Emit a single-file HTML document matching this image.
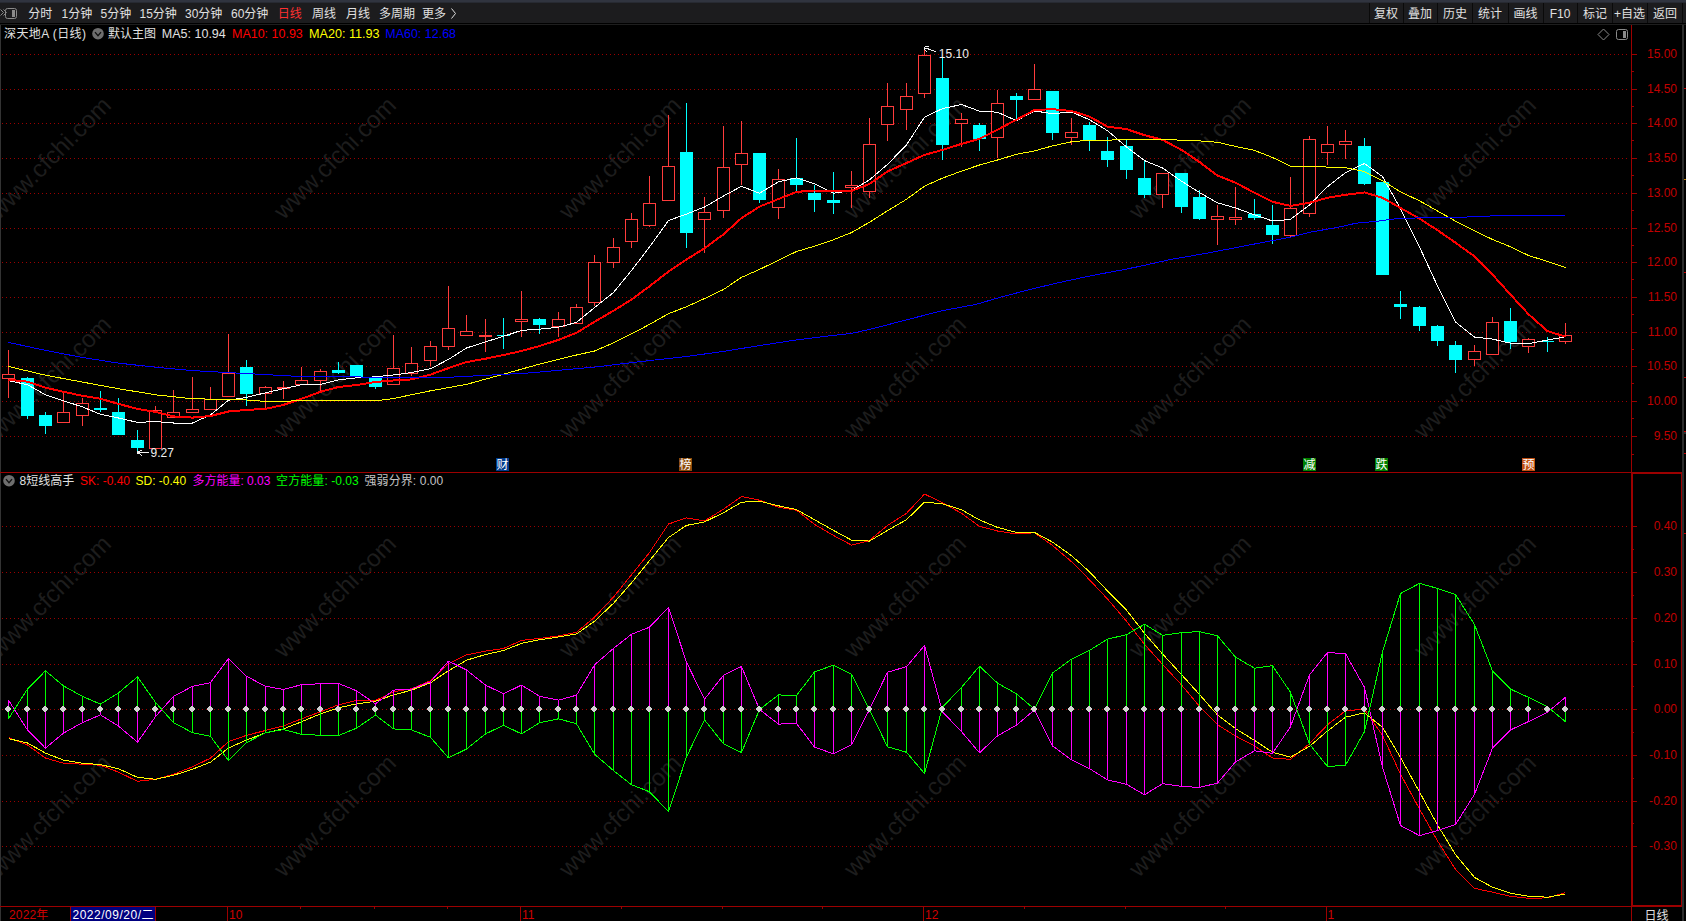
<!DOCTYPE html>
<html lang="zh"><head><meta charset="utf-8"><title>深天地A (日线)</title>
<style>
html,body{margin:0;padding:0;background:#000;}
body{width:1686px;height:921px;overflow:hidden;position:relative;font-family:"Liberation Sans","Noto Sans CJK SC",sans-serif;}
svg{position:absolute;left:0;top:0;display:block}
text{font-family:"Liberation Sans","Noto Sans CJK SC",sans-serif;font-size:12px;}
.wm text{font-size:24.3px;fill:#1d1d1d;}
.ce{shape-rendering:crispEdges}
</style></head><body>
<svg width="1686" height="921" viewBox="0 0 1686 921">
<rect width="1686" height="921" fill="#000"/>
<g class="wm">
<text text-anchor="middle" transform="translate(50,158.0) rotate(-45)" x="0" y="8">www.cfchi.com</text>
<text text-anchor="middle" transform="translate(335,158.0) rotate(-45)" x="0" y="8">www.cfchi.com</text>
<text text-anchor="middle" transform="translate(620,158.0) rotate(-45)" x="0" y="8">www.cfchi.com</text>
<text text-anchor="middle" transform="translate(905,158.0) rotate(-45)" x="0" y="8">www.cfchi.com</text>
<text text-anchor="middle" transform="translate(1190,158.0) rotate(-45)" x="0" y="8">www.cfchi.com</text>
<text text-anchor="middle" transform="translate(1475,158.0) rotate(-45)" x="0" y="8">www.cfchi.com</text>
<text text-anchor="middle" transform="translate(1760,158.0) rotate(-45)" x="0" y="8">www.cfchi.com</text>
<text text-anchor="middle" transform="translate(50,377.3) rotate(-45)" x="0" y="8">www.cfchi.com</text>
<text text-anchor="middle" transform="translate(335,377.3) rotate(-45)" x="0" y="8">www.cfchi.com</text>
<text text-anchor="middle" transform="translate(620,377.3) rotate(-45)" x="0" y="8">www.cfchi.com</text>
<text text-anchor="middle" transform="translate(905,377.3) rotate(-45)" x="0" y="8">www.cfchi.com</text>
<text text-anchor="middle" transform="translate(1190,377.3) rotate(-45)" x="0" y="8">www.cfchi.com</text>
<text text-anchor="middle" transform="translate(1475,377.3) rotate(-45)" x="0" y="8">www.cfchi.com</text>
<text text-anchor="middle" transform="translate(1760,377.3) rotate(-45)" x="0" y="8">www.cfchi.com</text>
<text text-anchor="middle" transform="translate(50,596.6) rotate(-45)" x="0" y="8">www.cfchi.com</text>
<text text-anchor="middle" transform="translate(335,596.6) rotate(-45)" x="0" y="8">www.cfchi.com</text>
<text text-anchor="middle" transform="translate(620,596.6) rotate(-45)" x="0" y="8">www.cfchi.com</text>
<text text-anchor="middle" transform="translate(905,596.6) rotate(-45)" x="0" y="8">www.cfchi.com</text>
<text text-anchor="middle" transform="translate(1190,596.6) rotate(-45)" x="0" y="8">www.cfchi.com</text>
<text text-anchor="middle" transform="translate(1475,596.6) rotate(-45)" x="0" y="8">www.cfchi.com</text>
<text text-anchor="middle" transform="translate(1760,596.6) rotate(-45)" x="0" y="8">www.cfchi.com</text>
<text text-anchor="middle" transform="translate(50,815.9000000000001) rotate(-45)" x="0" y="8">www.cfchi.com</text>
<text text-anchor="middle" transform="translate(335,815.9000000000001) rotate(-45)" x="0" y="8">www.cfchi.com</text>
<text text-anchor="middle" transform="translate(620,815.9000000000001) rotate(-45)" x="0" y="8">www.cfchi.com</text>
<text text-anchor="middle" transform="translate(905,815.9000000000001) rotate(-45)" x="0" y="8">www.cfchi.com</text>
<text text-anchor="middle" transform="translate(1190,815.9000000000001) rotate(-45)" x="0" y="8">www.cfchi.com</text>
<text text-anchor="middle" transform="translate(1475,815.9000000000001) rotate(-45)" x="0" y="8">www.cfchi.com</text>
<text text-anchor="middle" transform="translate(1760,815.9000000000001) rotate(-45)" x="0" y="8">www.cfchi.com</text>
</g>
<g class="ce" stroke="#9c0000" stroke-width="1" stroke-dasharray="1 3">
<line x1="2" y1="54.5" x2="1628" y2="54.5"/>
<line x1="2" y1="89.5" x2="1628" y2="89.5"/>
<line x1="2" y1="123.5" x2="1628" y2="123.5"/>
<line x1="2" y1="158.5" x2="1628" y2="158.5"/>
<line x1="2" y1="193.5" x2="1628" y2="193.5"/>
<line x1="2" y1="228.5" x2="1628" y2="228.5"/>
<line x1="2" y1="262.5" x2="1628" y2="262.5"/>
<line x1="2" y1="297.5" x2="1628" y2="297.5"/>
<line x1="2" y1="332.5" x2="1628" y2="332.5"/>
<line x1="2" y1="366.5" x2="1628" y2="366.5"/>
<line x1="2" y1="401.5" x2="1628" y2="401.5"/>
<line x1="2" y1="436.5" x2="1628" y2="436.5"/>
<line x1="2" y1="526.5" x2="1628" y2="526.5"/>
<line x1="2" y1="572.5" x2="1628" y2="572.5"/>
<line x1="2" y1="618.5" x2="1628" y2="618.5"/>
<line x1="2" y1="664.5" x2="1628" y2="664.5"/>
<line x1="2" y1="709.5" x2="1628" y2="709.5"/>
<line x1="2" y1="755.5" x2="1628" y2="755.5"/>
<line x1="2" y1="801.5" x2="1628" y2="801.5"/>
<line x1="2" y1="846.5" x2="1628" y2="846.5"/>
</g>
<g class="ce" fill="#9c0000">
<rect x="0" y="25" width="1" height="896" fill="#333"/>
<rect x="1682" y="24" width="2" height="897" fill="#2c2c2c"/>
<rect x="1631" y="25" width="1" height="447"/>
<rect x="1632" y="54" width="5" height="1"/>
<rect x="1632" y="71" width="2" height="1"/>
<rect x="1632" y="89" width="5" height="1"/>
<rect x="1632" y="106" width="2" height="1"/>
<rect x="1632" y="123" width="5" height="1"/>
<rect x="1632" y="140" width="2" height="1"/>
<rect x="1632" y="158" width="5" height="1"/>
<rect x="1632" y="175" width="2" height="1"/>
<rect x="1632" y="193" width="5" height="1"/>
<rect x="1632" y="210" width="2" height="1"/>
<rect x="1632" y="228" width="5" height="1"/>
<rect x="1632" y="245" width="2" height="1"/>
<rect x="1632" y="262" width="5" height="1"/>
<rect x="1632" y="279" width="2" height="1"/>
<rect x="1632" y="297" width="5" height="1"/>
<rect x="1632" y="314" width="2" height="1"/>
<rect x="1632" y="332" width="5" height="1"/>
<rect x="1632" y="349" width="2" height="1"/>
<rect x="1632" y="366" width="5" height="1"/>
<rect x="1632" y="383" width="2" height="1"/>
<rect x="1632" y="401" width="5" height="1"/>
<rect x="1632" y="418" width="2" height="1"/>
<rect x="1632" y="436" width="5" height="1"/>
<rect x="1632" y="454" width="2" height="1"/>
<rect x="0" y="472" width="1682" height="1"/>
<rect x="1631" y="472" width="2" height="434"/>
<rect x="1631" y="472" width="51" height="2"/>
<rect x="1681" y="472" width="1" height="434"/>
<rect x="1631" y="905" width="51" height="1"/>
<rect x="0" y="906" width="1682" height="1"/>
<rect x="1631" y="906" width="1" height="15"/>
<rect x="1633" y="526" width="4" height="1"/>
<rect x="1633" y="549" width="1" height="1"/>
<rect x="1633" y="572" width="4" height="1"/>
<rect x="1633" y="595" width="1" height="1"/>
<rect x="1633" y="618" width="4" height="1"/>
<rect x="1633" y="641" width="1" height="1"/>
<rect x="1633" y="664" width="4" height="1"/>
<rect x="1633" y="686" width="1" height="1"/>
<rect x="1633" y="709" width="4" height="1"/>
<rect x="1633" y="732" width="1" height="1"/>
<rect x="1633" y="755" width="4" height="1"/>
<rect x="1633" y="778" width="1" height="1"/>
<rect x="1633" y="801" width="4" height="1"/>
<rect x="1633" y="823" width="1" height="1"/>
<rect x="1633" y="846" width="4" height="1"/>
</g>
<g class="ce">
<rect x="8" y="350" width="1" height="24" fill="#ff3c3c"/>
<rect x="8" y="379" width="1" height="19" fill="#ff3c3c"/>
<rect x="2.5" y="374.5" width="12" height="4" fill="#000" stroke="#ff3c3c" stroke-width="1"/>
<rect x="27" y="377" width="1" height="42" fill="#00ffff"/>
<rect x="21" y="378" width="13" height="38" fill="#00ffff"/>
<rect x="45" y="412" width="1" height="22" fill="#00ffff"/>
<rect x="39" y="415" width="13" height="11" fill="#00ffff"/>
<rect x="63" y="392" width="1" height="20" fill="#ff3c3c"/>
<rect x="57.5" y="412.5" width="12" height="10" fill="#000" stroke="#ff3c3c" stroke-width="1"/>
<rect x="82" y="398" width="1" height="5" fill="#ff3c3c"/>
<rect x="82" y="416" width="1" height="10" fill="#ff3c3c"/>
<rect x="76.5" y="403.5" width="12" height="12" fill="#000" stroke="#ff3c3c" stroke-width="1"/>
<rect x="100" y="391" width="1" height="21" fill="#00ffff"/>
<rect x="94" y="408" width="13" height="2" fill="#00ffff"/>
<rect x="118" y="398" width="1" height="37" fill="#00ffff"/>
<rect x="112" y="412" width="13" height="23" fill="#00ffff"/>
<rect x="137" y="430" width="1" height="21" fill="#00ffff"/>
<rect x="131" y="440" width="13" height="8" fill="#00ffff"/>
<rect x="155" y="406" width="1" height="4" fill="#ff3c3c"/>
<rect x="149.5" y="410.5" width="12" height="38" fill="#000" stroke="#ff3c3c" stroke-width="1"/>
<rect x="173" y="390" width="1" height="22" fill="#ff3c3c"/>
<rect x="167.5" y="412.5" width="12" height="5" fill="#000" stroke="#ff3c3c" stroke-width="1"/>
<rect x="192" y="377" width="1" height="32" fill="#ff3c3c"/>
<rect x="186.5" y="409.5" width="12" height="3" fill="#000" stroke="#ff3c3c" stroke-width="1"/>
<rect x="210" y="387" width="1" height="12" fill="#ff3c3c"/>
<rect x="204.5" y="399.5" width="12" height="10" fill="#000" stroke="#ff3c3c" stroke-width="1"/>
<rect x="228" y="334" width="1" height="39" fill="#ff3c3c"/>
<rect x="222.5" y="373.5" width="12" height="23" fill="#000" stroke="#ff3c3c" stroke-width="1"/>
<rect x="246" y="360" width="1" height="46" fill="#00ffff"/>
<rect x="240" y="367" width="13" height="27" fill="#00ffff"/>
<rect x="265" y="386" width="1" height="1" fill="#ff3c3c"/>
<rect x="265" y="394" width="1" height="14" fill="#ff3c3c"/>
<rect x="259.5" y="387.5" width="12" height="6" fill="#000" stroke="#ff3c3c" stroke-width="1"/>
<rect x="283" y="381" width="1" height="6" fill="#ff3c3c"/>
<rect x="283" y="389" width="1" height="10" fill="#ff3c3c"/>
<rect x="277" y="387" width="13" height="2" fill="#ff3c3c"/>
<rect x="301" y="367" width="1" height="13" fill="#ff3c3c"/>
<rect x="295.5" y="380.5" width="12" height="4" fill="#000" stroke="#ff3c3c" stroke-width="1"/>
<rect x="320" y="369" width="1" height="2" fill="#ff3c3c"/>
<rect x="320" y="381" width="1" height="10" fill="#ff3c3c"/>
<rect x="314.5" y="371.5" width="12" height="9" fill="#000" stroke="#ff3c3c" stroke-width="1"/>
<rect x="338" y="362" width="1" height="12" fill="#00ffff"/>
<rect x="332" y="370" width="13" height="3" fill="#00ffff"/>
<rect x="356" y="365" width="1" height="12" fill="#00ffff"/>
<rect x="350" y="365" width="13" height="12" fill="#00ffff"/>
<rect x="375" y="378" width="1" height="11" fill="#00ffff"/>
<rect x="369" y="378" width="13" height="9" fill="#00ffff"/>
<rect x="393" y="335" width="1" height="33" fill="#ff3c3c"/>
<rect x="387.5" y="368.5" width="12" height="16" fill="#000" stroke="#ff3c3c" stroke-width="1"/>
<rect x="411" y="347" width="1" height="16" fill="#ff3c3c"/>
<rect x="411" y="374" width="1" height="2" fill="#ff3c3c"/>
<rect x="405.5" y="363.5" width="12" height="10" fill="#000" stroke="#ff3c3c" stroke-width="1"/>
<rect x="430" y="341" width="1" height="5" fill="#ff3c3c"/>
<rect x="430" y="361" width="1" height="5" fill="#ff3c3c"/>
<rect x="424.5" y="346.5" width="12" height="14" fill="#000" stroke="#ff3c3c" stroke-width="1"/>
<rect x="448" y="286" width="1" height="42" fill="#ff3c3c"/>
<rect x="448" y="347" width="1" height="3" fill="#ff3c3c"/>
<rect x="442.5" y="328.5" width="12" height="18" fill="#000" stroke="#ff3c3c" stroke-width="1"/>
<rect x="466" y="315" width="1" height="16" fill="#ff3c3c"/>
<rect x="460.5" y="331.5" width="12" height="4" fill="#000" stroke="#ff3c3c" stroke-width="1"/>
<rect x="485" y="319" width="1" height="16" fill="#ff3c3c"/>
<rect x="485" y="337" width="1" height="15" fill="#ff3c3c"/>
<rect x="479" y="335" width="13" height="2" fill="#ff3c3c"/>
<rect x="503" y="318" width="1" height="31" fill="#00ffff"/>
<rect x="497" y="335" width="13" height="1" fill="#00ffff"/>
<rect x="521" y="291" width="1" height="28" fill="#ff3c3c"/>
<rect x="521" y="322" width="1" height="15" fill="#ff3c3c"/>
<rect x="515.5" y="319.5" width="12" height="2" fill="#000" stroke="#ff3c3c" stroke-width="1"/>
<rect x="539" y="318" width="1" height="16" fill="#00ffff"/>
<rect x="533" y="319" width="13" height="6" fill="#00ffff"/>
<rect x="558" y="312" width="1" height="7" fill="#ff3c3c"/>
<rect x="558" y="327" width="1" height="10" fill="#ff3c3c"/>
<rect x="552.5" y="319.5" width="12" height="7" fill="#000" stroke="#ff3c3c" stroke-width="1"/>
<rect x="576" y="304" width="1" height="3" fill="#ff3c3c"/>
<rect x="570.5" y="307.5" width="12" height="16" fill="#000" stroke="#ff3c3c" stroke-width="1"/>
<rect x="594" y="255" width="1" height="7" fill="#ff3c3c"/>
<rect x="594" y="303" width="1" height="3" fill="#ff3c3c"/>
<rect x="588.5" y="262.5" width="12" height="40" fill="#000" stroke="#ff3c3c" stroke-width="1"/>
<rect x="613" y="238" width="1" height="9" fill="#ff3c3c"/>
<rect x="613" y="263" width="1" height="5" fill="#ff3c3c"/>
<rect x="607.5" y="247.5" width="12" height="15" fill="#000" stroke="#ff3c3c" stroke-width="1"/>
<rect x="631" y="213" width="1" height="6" fill="#ff3c3c"/>
<rect x="631" y="242" width="1" height="6" fill="#ff3c3c"/>
<rect x="625.5" y="219.5" width="12" height="22" fill="#000" stroke="#ff3c3c" stroke-width="1"/>
<rect x="649" y="176" width="1" height="27" fill="#ff3c3c"/>
<rect x="649" y="226" width="1" height="1" fill="#ff3c3c"/>
<rect x="643.5" y="203.5" width="12" height="22" fill="#000" stroke="#ff3c3c" stroke-width="1"/>
<rect x="668" y="115" width="1" height="51" fill="#ff3c3c"/>
<rect x="662.5" y="166.5" width="12" height="34" fill="#000" stroke="#ff3c3c" stroke-width="1"/>
<rect x="686" y="103" width="1" height="145" fill="#00ffff"/>
<rect x="680" y="152" width="13" height="81" fill="#00ffff"/>
<rect x="704" y="197" width="1" height="15" fill="#ff3c3c"/>
<rect x="704" y="220" width="1" height="33" fill="#ff3c3c"/>
<rect x="698.5" y="212.5" width="12" height="7" fill="#000" stroke="#ff3c3c" stroke-width="1"/>
<rect x="723" y="126" width="1" height="41" fill="#ff3c3c"/>
<rect x="723" y="211" width="1" height="7" fill="#ff3c3c"/>
<rect x="717.5" y="167.5" width="12" height="43" fill="#000" stroke="#ff3c3c" stroke-width="1"/>
<rect x="741" y="121" width="1" height="32" fill="#ff3c3c"/>
<rect x="741" y="165" width="1" height="20" fill="#ff3c3c"/>
<rect x="735.5" y="153.5" width="12" height="11" fill="#000" stroke="#ff3c3c" stroke-width="1"/>
<rect x="759" y="153" width="1" height="50" fill="#00ffff"/>
<rect x="753" y="153" width="13" height="47" fill="#00ffff"/>
<rect x="778" y="169" width="1" height="10" fill="#ff3c3c"/>
<rect x="778" y="208" width="1" height="11" fill="#ff3c3c"/>
<rect x="772.5" y="179.5" width="12" height="28" fill="#000" stroke="#ff3c3c" stroke-width="1"/>
<rect x="796" y="138" width="1" height="53" fill="#00ffff"/>
<rect x="790" y="178" width="13" height="7" fill="#00ffff"/>
<rect x="814" y="185" width="1" height="27" fill="#00ffff"/>
<rect x="808" y="193" width="13" height="7" fill="#00ffff"/>
<rect x="833" y="172" width="1" height="42" fill="#00ffff"/>
<rect x="827" y="200" width="13" height="3" fill="#00ffff"/>
<rect x="851" y="171" width="1" height="14" fill="#ff3c3c"/>
<rect x="851" y="188" width="1" height="20" fill="#ff3c3c"/>
<rect x="845.5" y="185.5" width="12" height="2" fill="#000" stroke="#ff3c3c" stroke-width="1"/>
<rect x="869" y="118" width="1" height="26" fill="#ff3c3c"/>
<rect x="869" y="192" width="1" height="6" fill="#ff3c3c"/>
<rect x="863.5" y="144.5" width="12" height="47" fill="#000" stroke="#ff3c3c" stroke-width="1"/>
<rect x="887" y="83" width="1" height="23" fill="#ff3c3c"/>
<rect x="887" y="125" width="1" height="16" fill="#ff3c3c"/>
<rect x="881.5" y="106.5" width="12" height="18" fill="#000" stroke="#ff3c3c" stroke-width="1"/>
<rect x="906" y="83" width="1" height="13" fill="#ff3c3c"/>
<rect x="906" y="110" width="1" height="20" fill="#ff3c3c"/>
<rect x="900.5" y="96.5" width="12" height="13" fill="#000" stroke="#ff3c3c" stroke-width="1"/>
<rect x="924" y="50" width="1" height="5" fill="#ff3c3c"/>
<rect x="924" y="94" width="1" height="4" fill="#ff3c3c"/>
<rect x="918.5" y="55.5" width="12" height="38" fill="#000" stroke="#ff3c3c" stroke-width="1"/>
<rect x="942" y="58" width="1" height="102" fill="#00ffff"/>
<rect x="936" y="78" width="13" height="67" fill="#00ffff"/>
<rect x="961" y="113" width="1" height="6" fill="#ff3c3c"/>
<rect x="961" y="124" width="1" height="23" fill="#ff3c3c"/>
<rect x="955.5" y="119.5" width="12" height="4" fill="#000" stroke="#ff3c3c" stroke-width="1"/>
<rect x="979" y="123" width="1" height="28" fill="#00ffff"/>
<rect x="973" y="125" width="13" height="14" fill="#00ffff"/>
<rect x="997" y="90" width="1" height="13" fill="#ff3c3c"/>
<rect x="997" y="138" width="1" height="20" fill="#ff3c3c"/>
<rect x="991.5" y="103.5" width="12" height="34" fill="#000" stroke="#ff3c3c" stroke-width="1"/>
<rect x="1016" y="93" width="1" height="26" fill="#00ffff"/>
<rect x="1010" y="96" width="13" height="4" fill="#00ffff"/>
<rect x="1034" y="64" width="1" height="25" fill="#ff3c3c"/>
<rect x="1028.5" y="89.5" width="12" height="10" fill="#000" stroke="#ff3c3c" stroke-width="1"/>
<rect x="1052" y="91" width="1" height="49" fill="#00ffff"/>
<rect x="1046" y="91" width="13" height="42" fill="#00ffff"/>
<rect x="1071" y="118" width="1" height="14" fill="#ff3c3c"/>
<rect x="1071" y="138" width="1" height="7" fill="#ff3c3c"/>
<rect x="1065.5" y="132.5" width="12" height="5" fill="#000" stroke="#ff3c3c" stroke-width="1"/>
<rect x="1089" y="122" width="1" height="29" fill="#00ffff"/>
<rect x="1083" y="125" width="13" height="15" fill="#00ffff"/>
<rect x="1107" y="137" width="1" height="30" fill="#00ffff"/>
<rect x="1101" y="151" width="13" height="9" fill="#00ffff"/>
<rect x="1126" y="139" width="1" height="40" fill="#00ffff"/>
<rect x="1120" y="146" width="13" height="24" fill="#00ffff"/>
<rect x="1144" y="160" width="1" height="38" fill="#00ffff"/>
<rect x="1138" y="178" width="13" height="17" fill="#00ffff"/>
<rect x="1162" y="195" width="1" height="13" fill="#ff3c3c"/>
<rect x="1156.5" y="173.5" width="12" height="21" fill="#000" stroke="#ff3c3c" stroke-width="1"/>
<rect x="1181" y="173" width="1" height="40" fill="#00ffff"/>
<rect x="1175" y="173" width="13" height="34" fill="#00ffff"/>
<rect x="1199" y="190" width="1" height="30" fill="#00ffff"/>
<rect x="1193" y="197" width="13" height="22" fill="#00ffff"/>
<rect x="1217" y="205" width="1" height="11" fill="#ff3c3c"/>
<rect x="1217" y="220" width="1" height="25" fill="#ff3c3c"/>
<rect x="1211.5" y="216.5" width="12" height="3" fill="#000" stroke="#ff3c3c" stroke-width="1"/>
<rect x="1235" y="187" width="1" height="30" fill="#ff3c3c"/>
<rect x="1235" y="220" width="1" height="5" fill="#ff3c3c"/>
<rect x="1229.5" y="217.5" width="12" height="2" fill="#000" stroke="#ff3c3c" stroke-width="1"/>
<rect x="1254" y="199" width="1" height="21" fill="#00ffff"/>
<rect x="1248" y="214" width="13" height="4" fill="#00ffff"/>
<rect x="1272" y="205" width="1" height="39" fill="#00ffff"/>
<rect x="1266" y="225" width="13" height="10" fill="#00ffff"/>
<rect x="1290" y="177" width="1" height="31" fill="#ff3c3c"/>
<rect x="1290" y="236" width="1" height="1" fill="#ff3c3c"/>
<rect x="1284.5" y="208.5" width="12" height="27" fill="#000" stroke="#ff3c3c" stroke-width="1"/>
<rect x="1309" y="136" width="1" height="3" fill="#ff3c3c"/>
<rect x="1309" y="214" width="1" height="3" fill="#ff3c3c"/>
<rect x="1303.5" y="139.5" width="12" height="74" fill="#000" stroke="#ff3c3c" stroke-width="1"/>
<rect x="1327" y="126" width="1" height="18" fill="#ff3c3c"/>
<rect x="1327" y="153" width="1" height="12" fill="#ff3c3c"/>
<rect x="1321.5" y="144.5" width="12" height="8" fill="#000" stroke="#ff3c3c" stroke-width="1"/>
<rect x="1345" y="130" width="1" height="11" fill="#ff3c3c"/>
<rect x="1345" y="145" width="1" height="14" fill="#ff3c3c"/>
<rect x="1339.5" y="141.5" width="12" height="3" fill="#000" stroke="#ff3c3c" stroke-width="1"/>
<rect x="1364" y="138" width="1" height="47" fill="#00ffff"/>
<rect x="1358" y="146" width="13" height="38" fill="#00ffff"/>
<rect x="1382" y="182" width="1" height="93" fill="#00ffff"/>
<rect x="1376" y="182" width="13" height="93" fill="#00ffff"/>
<rect x="1400" y="291" width="1" height="28" fill="#00ffff"/>
<rect x="1394" y="304" width="13" height="3" fill="#00ffff"/>
<rect x="1419" y="306" width="1" height="25" fill="#00ffff"/>
<rect x="1413" y="307" width="13" height="19" fill="#00ffff"/>
<rect x="1437" y="325" width="1" height="21" fill="#00ffff"/>
<rect x="1431" y="326" width="13" height="15" fill="#00ffff"/>
<rect x="1455" y="341" width="1" height="32" fill="#00ffff"/>
<rect x="1449" y="345" width="13" height="15" fill="#00ffff"/>
<rect x="1474" y="345" width="1" height="6" fill="#ff3c3c"/>
<rect x="1474" y="360" width="1" height="6" fill="#ff3c3c"/>
<rect x="1468.5" y="351.5" width="12" height="8" fill="#000" stroke="#ff3c3c" stroke-width="1"/>
<rect x="1492" y="317" width="1" height="5" fill="#ff3c3c"/>
<rect x="1486.5" y="322.5" width="12" height="32" fill="#000" stroke="#ff3c3c" stroke-width="1"/>
<rect x="1510" y="308" width="1" height="41" fill="#00ffff"/>
<rect x="1504" y="321" width="13" height="21" fill="#00ffff"/>
<rect x="1528" y="338" width="1" height="1" fill="#ff3c3c"/>
<rect x="1528" y="347" width="1" height="6" fill="#ff3c3c"/>
<rect x="1522.5" y="339.5" width="12" height="7" fill="#000" stroke="#ff3c3c" stroke-width="1"/>
<rect x="1547" y="337" width="1" height="15" fill="#00ffff"/>
<rect x="1541" y="341" width="13" height="1" fill="#00ffff"/>
<rect x="1565" y="323" width="1" height="12" fill="#ff3c3c"/>
<rect x="1565" y="342" width="1" height="2" fill="#ff3c3c"/>
<rect x="1559.5" y="335.5" width="12" height="6" fill="#000" stroke="#ff3c3c" stroke-width="1"/>
</g>
<polyline class="ce" points="8.5,380.7 27.5,384.7 45.5,394.8 63.5,400.8 82.5,406.9 100.5,414.3 118.5,418.0 137.5,422.4 155.5,421.6 173.5,423.0 192.5,423.0 210.5,414.9 228.5,400.2 246.5,397.4 265.5,392.8 283.5,388.7 301.5,384.7 320.5,384.3 338.5,379.8 356.5,377.8 375.5,376.8 393.5,375.0 411.5,372.5 430.5,368.7 448.5,359.4 466.5,348.0 485.5,341.9 503.5,336.3 521.5,330.4 539.5,329.2 558.5,327.2 576.5,322.4 594.5,307.6 613.5,292.5 631.5,270.5 649.5,247.0 668.5,220.5 686.5,214.1 704.5,207.0 723.5,196.0 741.5,186.3 759.5,193.3 778.5,181.8 796.5,177.8 814.5,183.9 833.5,193.3 851.5,190.5 869.5,179.8 887.5,164.4 906.5,144.9 924.5,117.2 942.5,108.6 961.5,104.5 979.5,111.2 997.5,112.2 1016.5,120.7 1034.5,111.0 1052.5,113.6 1071.5,112.0 1089.5,119.7 1107.5,130.7 1126.5,146.9 1144.5,160.6 1162.5,168.0 1181.5,181.2 1199.5,192.5 1217.5,202.8 1235.5,207.9 1254.5,214.9 1272.5,221.0 1290.5,219.4 1309.5,204.9 1327.5,186.7 1345.5,172.6 1364.5,163.5 1382.5,176.6 1400.5,208.7 1419.5,247.0 1437.5,286.0 1455.5,322.0 1474.5,337.1 1492.5,339.1 1510.5,343.2 1528.5,343.6 1547.5,340.1 1565.5,336.7" fill="none" stroke="#ffffff" stroke-width="1" />
<polyline class="ce" points="8.5,379.7 27.5,381.7 45.5,387.7 63.5,391.8 82.5,395.8 100.5,398.8 118.5,403.9 137.5,408.9 155.5,411.9 173.5,416.4 192.5,417.6 210.5,416.0 228.5,411.5 246.5,409.9 265.5,408.9 283.5,404.9 301.5,398.8 320.5,391.8 338.5,387.0 356.5,385.0 375.5,382.0 393.5,380.5 411.5,379.4 430.5,374.6 448.5,368.1 466.5,362.1 485.5,358.7 503.5,355.0 521.5,351.0 539.5,346.0 558.5,339.9 576.5,332.8 594.5,321.8 613.5,310.7 631.5,299.6 649.5,286.3 668.5,271.5 686.5,259.4 704.5,248.4 723.5,234.3 741.5,218.1 759.5,206.6 778.5,199.0 796.5,191.9 814.5,190.5 833.5,190.5 851.5,190.9 869.5,183.9 887.5,171.5 906.5,163.0 924.5,154.9 942.5,149.9 961.5,143.9 979.5,138.8 997.5,129.7 1016.5,119.7 1034.5,110.0 1052.5,109.2 1071.5,111.0 1089.5,116.6 1107.5,126.7 1126.5,129.1 1144.5,135.2 1162.5,139.8 1181.5,149.9 1199.5,162.0 1217.5,175.6 1235.5,182.7 1254.5,192.8 1272.5,201.8 1290.5,205.9 1309.5,202.8 1327.5,197.8 1345.5,194.8 1364.5,192.4 1382.5,197.8 1400.5,208.0 1419.5,218.6 1437.5,230.2 1455.5,242.7 1474.5,256.4 1492.5,274.6 1510.5,294.6 1528.5,314.2 1547.5,331.1 1565.5,336.7" fill="none" stroke="#ff0000" stroke-width="2" stroke-linejoin="round"/>
<polyline class="ce" points="8.5,366.5 45.5,375.2 82.5,382.1 118.5,388.7 155.5,394.8 192.5,398.8 228.5,399.4 246.5,400.0 265.5,401.4 283.5,401.4 301.5,400.5 338.5,400.8 375.5,400.8 393.5,398.5 430.5,390.8 466.5,384.4 503.5,374.2 539.5,364.1 576.5,355.0 594.5,351.0 613.5,342.9 631.5,333.9 649.5,324.4 668.5,313.7 686.5,306.7 704.5,298.6 723.5,289.5 741.5,277.4 759.5,269.4 778.5,260.3 796.5,251.5 814.5,246.2 833.5,239.7 851.5,232.6 869.5,222.2 887.5,210.8 906.5,199.3 924.5,186.2 942.5,178.1 961.5,171.1 979.5,165.0 997.5,160.0 1016.5,154.3 1034.5,150.9 1052.5,145.9 1071.5,141.8 1089.5,140.2 1107.5,140.2 1126.5,139.4 1144.5,139.4 1162.5,139.4 1181.5,140.2 1199.5,140.9 1217.5,142.3 1235.5,146.4 1254.5,150.4 1272.5,157.5 1290.5,166.1 1309.5,166.1 1327.5,167.1 1345.5,167.6 1364.5,171.6 1382.5,180.7 1400.5,191.8 1419.5,200.8 1437.5,211.0 1455.5,221.1 1474.5,230.7 1492.5,239.5 1510.5,246.8 1528.5,255.5 1547.5,261.5 1565.5,267.6" fill="none" stroke="#ffff00" stroke-width="1" />
<polyline class="ce" points="8.0,342.3 45.4,350.4 82.5,357.5 118.4,363.1 155.3,367.2 192.4,370.6 228.5,372.6 265.4,374.6 301.5,376.6 340.0,376.8 380.4,377.2 451.0,377.2 495.4,374.8 531.7,372.8 594.4,367.1 650.0,360.5 686.5,356.5 723.4,351.4 759.5,345.6 796.6,339.9 832.5,335.5 851.7,333.3 871.8,328.9 906.5,319.8 942.4,310.7 976.0,304.4 1000.2,297.3 1030.5,289.3 1060.7,282.2 1091.0,275.7 1121.2,270.1 1140.0,266.3 1170.0,259.6 1210.6,252.5 1251.4,244.6 1290.0,237.3 1309.4,232.3 1337.0,227.5 1356.0,223.2 1377.0,221.3 1387.0,219.9 1398.6,218.5 1428.0,217.6 1465.0,217.1 1501.3,215.5 1565.5,215.3" fill="none" stroke="#0000ff" stroke-width="1" />
<polyline class="ce" points="8.5,737.6 27.5,745.0 45.5,758.1 63.5,763.2 82.5,764.2 100.5,765.2 118.5,772.2 137.5,781.3 155.5,779.3 173.5,774.3 192.5,766.8 210.5,758.1 228.5,741.6 246.5,735.3 265.5,730.5 283.5,725.9 301.5,718.8 320.5,711.8 338.5,704.8 356.5,700.5 375.5,700.5 393.5,691.8 411.5,688.8 430.5,680.7 448.5,663.6 466.5,654.9 485.5,651.1 503.5,648.5 521.5,640.4 539.5,638.4 558.5,636.0 576.5,632.3 594.5,617.2 613.5,597.0 631.5,574.8 649.5,552.6 668.5,524.0 686.5,517.9 704.5,520.9 723.5,509.2 741.5,496.5 759.5,500.2 778.5,507.2 796.5,510.2 814.5,524.4 833.5,535.5 851.5,545.1 869.5,540.5 887.5,525.4 906.5,513.3 924.5,494.1 942.5,502.6 961.5,513.3 979.5,526.4 997.5,531.0 1016.5,534.0 1034.5,532.8 1052.5,545.5 1071.5,561.7 1089.5,579.8 1107.5,599.0 1126.5,621.2 1144.5,644.3 1162.5,664.4 1181.5,684.9 1199.5,706.3 1217.5,724.7 1235.5,736.0 1254.5,745.9 1272.5,758.0 1290.5,759.3 1309.5,743.6 1327.5,724.7 1345.5,710.8 1364.5,709.2 1382.5,735.4 1400.5,774.2 1419.5,809.0 1437.5,840.9 1455.5,869.4 1474.5,888.3 1492.5,892.2 1510.5,896.3 1528.5,898.3 1547.5,897.9 1565.5,892.6" fill="none" stroke="#ff0000" stroke-width="1" />
<polyline class="ce" points="8.5,738.6 27.5,743.0 45.5,753.1 63.5,760.1 82.5,763.2 100.5,764.6 118.5,768.8 137.5,777.3 155.5,779.3 173.5,775.3 192.5,769.2 210.5,762.2 228.5,748.0 246.5,740.0 265.5,732.9 283.5,728.9 301.5,721.8 320.5,713.8 338.5,707.8 356.5,703.9 375.5,701.3 393.5,694.9 411.5,690.2 430.5,682.8 448.5,670.7 466.5,660.2 485.5,654.5 503.5,650.5 521.5,643.4 539.5,639.8 558.5,637.0 576.5,634.0 594.5,621.3 613.5,603.3 631.5,582.8 649.5,560.7 668.5,537.5 686.5,525.4 704.5,521.9 723.5,512.7 741.5,502.2 759.5,501.2 778.5,505.8 796.5,509.6 814.5,519.7 833.5,530.4 851.5,540.1 869.5,541.1 887.5,530.4 906.5,519.7 924.5,502.2 942.5,503.8 961.5,509.8 979.5,519.9 997.5,527.4 1016.5,532.4 1034.5,532.4 1052.5,542.1 1071.5,555.6 1089.5,571.8 1107.5,590.9 1126.5,610.1 1144.5,633.3 1162.5,653.9 1181.5,674.6 1199.5,694.5 1217.5,715.0 1235.5,728.6 1254.5,740.4 1272.5,752.2 1290.5,757.2 1309.5,746.3 1327.5,731.0 1345.5,717.2 1364.5,712.8 1382.5,727.3 1400.5,757.5 1419.5,792.0 1437.5,824.9 1455.5,854.6 1474.5,877.4 1492.5,887.2 1510.5,893.3 1528.5,896.3 1547.5,897.2 1565.5,894.0" fill="none" stroke="#ffff00" stroke-width="1" />
<g class="ce">
<rect x="8" y="700" width="1" height="9" fill="#ff00ff"/>
<rect x="8" y="710" width="1" height="9" fill="#00ff00"/>
<rect x="27" y="688" width="1" height="21" fill="#00ff00"/>
<rect x="27" y="710" width="1" height="21" fill="#ff00ff"/>
<rect x="45" y="670" width="1" height="39" fill="#00ff00"/>
<rect x="45" y="710" width="1" height="39" fill="#ff00ff"/>
<rect x="63" y="685" width="1" height="24" fill="#00ff00"/>
<rect x="63" y="710" width="1" height="24" fill="#ff00ff"/>
<rect x="82" y="696" width="1" height="13" fill="#00ff00"/>
<rect x="82" y="710" width="1" height="13" fill="#ff00ff"/>
<rect x="100" y="704" width="1" height="5" fill="#00ff00"/>
<rect x="100" y="710" width="1" height="5" fill="#ff00ff"/>
<rect x="118" y="692" width="1" height="17" fill="#00ff00"/>
<rect x="118" y="710" width="1" height="17" fill="#ff00ff"/>
<rect x="137" y="676" width="1" height="33" fill="#00ff00"/>
<rect x="137" y="710" width="1" height="33" fill="#ff00ff"/>
<rect x="155" y="702" width="1" height="7" fill="#00ff00"/>
<rect x="155" y="710" width="1" height="7" fill="#ff00ff"/>
<rect x="173" y="696" width="1" height="13" fill="#ff00ff"/>
<rect x="173" y="710" width="1" height="13" fill="#00ff00"/>
<rect x="192" y="686" width="1" height="23" fill="#ff00ff"/>
<rect x="192" y="710" width="1" height="23" fill="#00ff00"/>
<rect x="210" y="682" width="1" height="27" fill="#ff00ff"/>
<rect x="210" y="710" width="1" height="27" fill="#00ff00"/>
<rect x="228" y="658" width="1" height="51" fill="#ff00ff"/>
<rect x="228" y="710" width="1" height="51" fill="#00ff00"/>
<rect x="246" y="676" width="1" height="33" fill="#ff00ff"/>
<rect x="246" y="710" width="1" height="33" fill="#00ff00"/>
<rect x="265" y="686" width="1" height="23" fill="#ff00ff"/>
<rect x="265" y="710" width="1" height="23" fill="#00ff00"/>
<rect x="283" y="689" width="1" height="20" fill="#ff00ff"/>
<rect x="283" y="710" width="1" height="20" fill="#00ff00"/>
<rect x="301" y="684" width="1" height="25" fill="#ff00ff"/>
<rect x="301" y="710" width="1" height="25" fill="#00ff00"/>
<rect x="320" y="683" width="1" height="26" fill="#ff00ff"/>
<rect x="320" y="710" width="1" height="26" fill="#00ff00"/>
<rect x="338" y="683" width="1" height="26" fill="#ff00ff"/>
<rect x="338" y="710" width="1" height="26" fill="#00ff00"/>
<rect x="356" y="690" width="1" height="19" fill="#ff00ff"/>
<rect x="356" y="710" width="1" height="19" fill="#00ff00"/>
<rect x="375" y="703" width="1" height="6" fill="#ff00ff"/>
<rect x="375" y="710" width="1" height="6" fill="#00ff00"/>
<rect x="393" y="690" width="1" height="19" fill="#ff00ff"/>
<rect x="393" y="710" width="1" height="19" fill="#00ff00"/>
<rect x="411" y="689" width="1" height="20" fill="#ff00ff"/>
<rect x="411" y="710" width="1" height="20" fill="#00ff00"/>
<rect x="430" y="681" width="1" height="28" fill="#ff00ff"/>
<rect x="430" y="710" width="1" height="28" fill="#00ff00"/>
<rect x="448" y="661" width="1" height="48" fill="#ff00ff"/>
<rect x="448" y="710" width="1" height="48" fill="#00ff00"/>
<rect x="466" y="669" width="1" height="40" fill="#ff00ff"/>
<rect x="466" y="710" width="1" height="40" fill="#00ff00"/>
<rect x="485" y="685" width="1" height="24" fill="#ff00ff"/>
<rect x="485" y="710" width="1" height="24" fill="#00ff00"/>
<rect x="503" y="693" width="1" height="16" fill="#ff00ff"/>
<rect x="503" y="710" width="1" height="16" fill="#00ff00"/>
<rect x="521" y="685" width="1" height="24" fill="#ff00ff"/>
<rect x="521" y="710" width="1" height="24" fill="#00ff00"/>
<rect x="539" y="696" width="1" height="13" fill="#ff00ff"/>
<rect x="539" y="710" width="1" height="13" fill="#00ff00"/>
<rect x="558" y="700" width="1" height="9" fill="#ff00ff"/>
<rect x="558" y="710" width="1" height="9" fill="#00ff00"/>
<rect x="576" y="695" width="1" height="14" fill="#ff00ff"/>
<rect x="576" y="710" width="1" height="14" fill="#00ff00"/>
<rect x="594" y="664" width="1" height="45" fill="#ff00ff"/>
<rect x="594" y="710" width="1" height="45" fill="#00ff00"/>
<rect x="613" y="648" width="1" height="61" fill="#ff00ff"/>
<rect x="613" y="710" width="1" height="61" fill="#00ff00"/>
<rect x="631" y="634" width="1" height="75" fill="#ff00ff"/>
<rect x="631" y="710" width="1" height="75" fill="#00ff00"/>
<rect x="649" y="627" width="1" height="82" fill="#ff00ff"/>
<rect x="649" y="710" width="1" height="82" fill="#00ff00"/>
<rect x="668" y="607" width="1" height="102" fill="#ff00ff"/>
<rect x="668" y="710" width="1" height="102" fill="#00ff00"/>
<rect x="686" y="662" width="1" height="47" fill="#ff00ff"/>
<rect x="686" y="710" width="1" height="47" fill="#00ff00"/>
<rect x="704" y="699" width="1" height="10" fill="#ff00ff"/>
<rect x="704" y="710" width="1" height="10" fill="#00ff00"/>
<rect x="723" y="675" width="1" height="34" fill="#ff00ff"/>
<rect x="723" y="710" width="1" height="34" fill="#00ff00"/>
<rect x="741" y="666" width="1" height="43" fill="#ff00ff"/>
<rect x="741" y="710" width="1" height="43" fill="#00ff00"/>
<rect x="778" y="694" width="1" height="15" fill="#00ff00"/>
<rect x="778" y="710" width="1" height="15" fill="#ff00ff"/>
<rect x="796" y="695" width="1" height="14" fill="#00ff00"/>
<rect x="796" y="710" width="1" height="14" fill="#ff00ff"/>
<rect x="814" y="671" width="1" height="38" fill="#00ff00"/>
<rect x="814" y="710" width="1" height="38" fill="#ff00ff"/>
<rect x="833" y="665" width="1" height="44" fill="#00ff00"/>
<rect x="833" y="710" width="1" height="44" fill="#ff00ff"/>
<rect x="851" y="674" width="1" height="35" fill="#00ff00"/>
<rect x="851" y="710" width="1" height="35" fill="#ff00ff"/>
<rect x="887" y="672" width="1" height="37" fill="#ff00ff"/>
<rect x="887" y="710" width="1" height="37" fill="#00ff00"/>
<rect x="906" y="666" width="1" height="43" fill="#ff00ff"/>
<rect x="906" y="710" width="1" height="43" fill="#00ff00"/>
<rect x="924" y="645" width="1" height="64" fill="#ff00ff"/>
<rect x="924" y="710" width="1" height="64" fill="#00ff00"/>
<rect x="942" y="707" width="1" height="2" fill="#00ff00"/>
<rect x="942" y="710" width="1" height="2" fill="#ff00ff"/>
<rect x="961" y="687" width="1" height="22" fill="#00ff00"/>
<rect x="961" y="710" width="1" height="22" fill="#ff00ff"/>
<rect x="979" y="666" width="1" height="43" fill="#00ff00"/>
<rect x="979" y="710" width="1" height="43" fill="#ff00ff"/>
<rect x="997" y="683" width="1" height="26" fill="#00ff00"/>
<rect x="997" y="710" width="1" height="26" fill="#ff00ff"/>
<rect x="1016" y="693" width="1" height="16" fill="#00ff00"/>
<rect x="1016" y="710" width="1" height="16" fill="#ff00ff"/>
<rect x="1052" y="673" width="1" height="36" fill="#00ff00"/>
<rect x="1052" y="710" width="1" height="36" fill="#ff00ff"/>
<rect x="1071" y="659" width="1" height="50" fill="#00ff00"/>
<rect x="1071" y="710" width="1" height="50" fill="#ff00ff"/>
<rect x="1089" y="650" width="1" height="59" fill="#00ff00"/>
<rect x="1089" y="710" width="1" height="59" fill="#ff00ff"/>
<rect x="1107" y="639" width="1" height="70" fill="#00ff00"/>
<rect x="1107" y="710" width="1" height="70" fill="#ff00ff"/>
<rect x="1126" y="634" width="1" height="75" fill="#00ff00"/>
<rect x="1126" y="710" width="1" height="75" fill="#ff00ff"/>
<rect x="1144" y="624" width="1" height="85" fill="#00ff00"/>
<rect x="1144" y="710" width="1" height="85" fill="#ff00ff"/>
<rect x="1162" y="635" width="1" height="74" fill="#00ff00"/>
<rect x="1162" y="710" width="1" height="74" fill="#ff00ff"/>
<rect x="1181" y="632" width="1" height="77" fill="#00ff00"/>
<rect x="1181" y="710" width="1" height="77" fill="#ff00ff"/>
<rect x="1199" y="631" width="1" height="78" fill="#00ff00"/>
<rect x="1199" y="710" width="1" height="78" fill="#ff00ff"/>
<rect x="1217" y="635" width="1" height="74" fill="#00ff00"/>
<rect x="1217" y="710" width="1" height="74" fill="#ff00ff"/>
<rect x="1235" y="657" width="1" height="52" fill="#00ff00"/>
<rect x="1235" y="710" width="1" height="52" fill="#ff00ff"/>
<rect x="1254" y="668" width="1" height="41" fill="#00ff00"/>
<rect x="1254" y="710" width="1" height="41" fill="#ff00ff"/>
<rect x="1272" y="665" width="1" height="44" fill="#00ff00"/>
<rect x="1272" y="710" width="1" height="44" fill="#ff00ff"/>
<rect x="1290" y="692" width="1" height="17" fill="#00ff00"/>
<rect x="1290" y="710" width="1" height="17" fill="#ff00ff"/>
<rect x="1309" y="674" width="1" height="35" fill="#ff00ff"/>
<rect x="1309" y="710" width="1" height="35" fill="#00ff00"/>
<rect x="1327" y="652" width="1" height="57" fill="#ff00ff"/>
<rect x="1327" y="710" width="1" height="57" fill="#00ff00"/>
<rect x="1345" y="653" width="1" height="56" fill="#ff00ff"/>
<rect x="1345" y="710" width="1" height="56" fill="#00ff00"/>
<rect x="1364" y="687" width="1" height="22" fill="#ff00ff"/>
<rect x="1364" y="710" width="1" height="22" fill="#00ff00"/>
<rect x="1382" y="651" width="1" height="58" fill="#00ff00"/>
<rect x="1382" y="710" width="1" height="58" fill="#ff00ff"/>
<rect x="1400" y="593" width="1" height="116" fill="#00ff00"/>
<rect x="1400" y="710" width="1" height="116" fill="#ff00ff"/>
<rect x="1419" y="583" width="1" height="126" fill="#00ff00"/>
<rect x="1419" y="710" width="1" height="126" fill="#ff00ff"/>
<rect x="1437" y="588" width="1" height="121" fill="#00ff00"/>
<rect x="1437" y="710" width="1" height="121" fill="#ff00ff"/>
<rect x="1455" y="594" width="1" height="115" fill="#00ff00"/>
<rect x="1455" y="710" width="1" height="115" fill="#ff00ff"/>
<rect x="1474" y="624" width="1" height="85" fill="#00ff00"/>
<rect x="1474" y="710" width="1" height="85" fill="#ff00ff"/>
<rect x="1492" y="670" width="1" height="39" fill="#00ff00"/>
<rect x="1492" y="710" width="1" height="39" fill="#ff00ff"/>
<rect x="1510" y="689" width="1" height="20" fill="#00ff00"/>
<rect x="1510" y="710" width="1" height="20" fill="#ff00ff"/>
<rect x="1528" y="697" width="1" height="12" fill="#00ff00"/>
<rect x="1528" y="710" width="1" height="12" fill="#ff00ff"/>
<rect x="1547" y="706" width="1" height="3" fill="#00ff00"/>
<rect x="1547" y="710" width="1" height="3" fill="#ff00ff"/>
<rect x="1565" y="697" width="1" height="12" fill="#ff00ff"/>
<rect x="1565" y="710" width="1" height="12" fill="#00ff00"/>
</g>
<polyline class="ce" points="8.5,700.2 27.5,730.1 45.5,748.2 63.5,733.1 82.5,722.6 100.5,714.9 118.5,726.1 137.5,742.2 155.5,716.6 173.5,696.4 192.5,686.3 210.5,682.7 228.5,658.5 246.5,676.3 265.5,686.3 283.5,689.4 301.5,684.7 320.5,683.7 338.5,683.5 356.5,690.8 375.5,703.9 393.5,690.1 411.5,689.1 430.5,681.7 448.5,661.1 466.5,670.0 485.5,685.1 503.5,693.8 521.5,685.1 539.5,696.2 558.5,700.2 576.5,695.2 594.5,664.9 613.5,648.4 631.5,634.3 649.5,627.2 668.5,607.4 686.5,662.2 704.5,699.2 723.5,675.2 741.5,666.5 759.5,709.5 778.5,724.1 796.5,723.4 814.5,747.1 833.5,753.8 851.5,744.6 869.5,709.5 887.5,672.2 906.5,666.7 924.5,645.5 942.5,711.9 961.5,731.6 979.5,752.8 997.5,735.9 1016.5,725.1 1034.5,709.9 1052.5,745.9 1071.5,759.9 1089.5,768.6 1107.5,779.9 1126.5,784.3 1144.5,794.8 1162.5,783.7 1181.5,786.4 1199.5,787.4 1217.5,783.1 1235.5,761.9 1254.5,750.8 1272.5,753.3 1290.5,726.7 1309.5,674.9 1327.5,652.5 1345.5,653.7 1364.5,687.4 1382.5,767.2 1400.5,825.5 1419.5,835.6 1437.5,830.6 1455.5,824.6 1474.5,794.4 1492.5,748.1 1510.5,729.9 1528.5,721.6 1547.5,712.3 1565.5,697.2" fill="none" stroke="#ff00ff" stroke-width="1" />
<polyline class="ce" points="8.5,718.8 27.5,688.9 45.5,670.8 63.5,685.9 82.5,696.4 100.5,704.1 118.5,692.9 137.5,676.8 155.5,702.4 173.5,722.6 192.5,732.7 210.5,736.3 228.5,760.5 246.5,742.7 265.5,732.7 283.5,729.6 301.5,734.3 320.5,735.3 338.5,735.5 356.5,728.2 375.5,715.1 393.5,728.9 411.5,729.9 430.5,737.3 448.5,757.9 466.5,749.0 485.5,733.9 503.5,725.2 521.5,733.9 539.5,722.8 558.5,718.8 576.5,723.8 594.5,754.1 613.5,770.6 631.5,784.7 649.5,791.8 668.5,811.6 686.5,756.8 704.5,719.8 723.5,743.8 741.5,752.5 759.5,709.5 778.5,694.9 796.5,695.6 814.5,671.9 833.5,665.2 851.5,674.4 869.5,709.5 887.5,746.8 906.5,752.3 924.5,773.5 942.5,707.1 961.5,687.4 979.5,666.2 997.5,683.1 1016.5,693.9 1034.5,709.1 1052.5,673.1 1071.5,659.1 1089.5,650.4 1107.5,639.1 1126.5,634.7 1144.5,624.2 1162.5,635.3 1181.5,632.6 1199.5,631.6 1217.5,635.9 1235.5,657.1 1254.5,668.2 1272.5,665.7 1290.5,692.3 1309.5,744.1 1327.5,766.5 1345.5,765.3 1364.5,731.6 1382.5,651.8 1400.5,593.5 1419.5,583.4 1437.5,588.4 1455.5,594.4 1474.5,624.6 1492.5,670.9 1510.5,689.1 1528.5,697.4 1547.5,706.7 1565.5,721.8" fill="none" stroke="#00ff00" stroke-width="1" />
<g class="ce" fill="#d2d2d2">
<path d="M7 706h2v1h1v1h1v2h-1v1h-1v1h-2v-1h-1v-1h-1v-2h1v-1h1z"/>
<path d="M26 706h2v1h1v1h1v2h-1v1h-1v1h-2v-1h-1v-1h-1v-2h1v-1h1z"/>
<path d="M44 706h2v1h1v1h1v2h-1v1h-1v1h-2v-1h-1v-1h-1v-2h1v-1h1z"/>
<path d="M62 706h2v1h1v1h1v2h-1v1h-1v1h-2v-1h-1v-1h-1v-2h1v-1h1z"/>
<path d="M81 706h2v1h1v1h1v2h-1v1h-1v1h-2v-1h-1v-1h-1v-2h1v-1h1z"/>
<path d="M99 706h2v1h1v1h1v2h-1v1h-1v1h-2v-1h-1v-1h-1v-2h1v-1h1z"/>
<path d="M117 706h2v1h1v1h1v2h-1v1h-1v1h-2v-1h-1v-1h-1v-2h1v-1h1z"/>
<path d="M136 706h2v1h1v1h1v2h-1v1h-1v1h-2v-1h-1v-1h-1v-2h1v-1h1z"/>
<path d="M154 706h2v1h1v1h1v2h-1v1h-1v1h-2v-1h-1v-1h-1v-2h1v-1h1z"/>
<path d="M172 706h2v1h1v1h1v2h-1v1h-1v1h-2v-1h-1v-1h-1v-2h1v-1h1z"/>
<path d="M191 706h2v1h1v1h1v2h-1v1h-1v1h-2v-1h-1v-1h-1v-2h1v-1h1z"/>
<path d="M209 706h2v1h1v1h1v2h-1v1h-1v1h-2v-1h-1v-1h-1v-2h1v-1h1z"/>
<path d="M227 706h2v1h1v1h1v2h-1v1h-1v1h-2v-1h-1v-1h-1v-2h1v-1h1z"/>
<path d="M245 706h2v1h1v1h1v2h-1v1h-1v1h-2v-1h-1v-1h-1v-2h1v-1h1z"/>
<path d="M264 706h2v1h1v1h1v2h-1v1h-1v1h-2v-1h-1v-1h-1v-2h1v-1h1z"/>
<path d="M282 706h2v1h1v1h1v2h-1v1h-1v1h-2v-1h-1v-1h-1v-2h1v-1h1z"/>
<path d="M300 706h2v1h1v1h1v2h-1v1h-1v1h-2v-1h-1v-1h-1v-2h1v-1h1z"/>
<path d="M319 706h2v1h1v1h1v2h-1v1h-1v1h-2v-1h-1v-1h-1v-2h1v-1h1z"/>
<path d="M337 706h2v1h1v1h1v2h-1v1h-1v1h-2v-1h-1v-1h-1v-2h1v-1h1z"/>
<path d="M355 706h2v1h1v1h1v2h-1v1h-1v1h-2v-1h-1v-1h-1v-2h1v-1h1z"/>
<path d="M374 706h2v1h1v1h1v2h-1v1h-1v1h-2v-1h-1v-1h-1v-2h1v-1h1z"/>
<path d="M392 706h2v1h1v1h1v2h-1v1h-1v1h-2v-1h-1v-1h-1v-2h1v-1h1z"/>
<path d="M410 706h2v1h1v1h1v2h-1v1h-1v1h-2v-1h-1v-1h-1v-2h1v-1h1z"/>
<path d="M429 706h2v1h1v1h1v2h-1v1h-1v1h-2v-1h-1v-1h-1v-2h1v-1h1z"/>
<path d="M447 706h2v1h1v1h1v2h-1v1h-1v1h-2v-1h-1v-1h-1v-2h1v-1h1z"/>
<path d="M465 706h2v1h1v1h1v2h-1v1h-1v1h-2v-1h-1v-1h-1v-2h1v-1h1z"/>
<path d="M484 706h2v1h1v1h1v2h-1v1h-1v1h-2v-1h-1v-1h-1v-2h1v-1h1z"/>
<path d="M502 706h2v1h1v1h1v2h-1v1h-1v1h-2v-1h-1v-1h-1v-2h1v-1h1z"/>
<path d="M520 706h2v1h1v1h1v2h-1v1h-1v1h-2v-1h-1v-1h-1v-2h1v-1h1z"/>
<path d="M538 706h2v1h1v1h1v2h-1v1h-1v1h-2v-1h-1v-1h-1v-2h1v-1h1z"/>
<path d="M557 706h2v1h1v1h1v2h-1v1h-1v1h-2v-1h-1v-1h-1v-2h1v-1h1z"/>
<path d="M575 706h2v1h1v1h1v2h-1v1h-1v1h-2v-1h-1v-1h-1v-2h1v-1h1z"/>
<path d="M593 706h2v1h1v1h1v2h-1v1h-1v1h-2v-1h-1v-1h-1v-2h1v-1h1z"/>
<path d="M612 706h2v1h1v1h1v2h-1v1h-1v1h-2v-1h-1v-1h-1v-2h1v-1h1z"/>
<path d="M630 706h2v1h1v1h1v2h-1v1h-1v1h-2v-1h-1v-1h-1v-2h1v-1h1z"/>
<path d="M648 706h2v1h1v1h1v2h-1v1h-1v1h-2v-1h-1v-1h-1v-2h1v-1h1z"/>
<path d="M667 706h2v1h1v1h1v2h-1v1h-1v1h-2v-1h-1v-1h-1v-2h1v-1h1z"/>
<path d="M685 706h2v1h1v1h1v2h-1v1h-1v1h-2v-1h-1v-1h-1v-2h1v-1h1z"/>
<path d="M703 706h2v1h1v1h1v2h-1v1h-1v1h-2v-1h-1v-1h-1v-2h1v-1h1z"/>
<path d="M722 706h2v1h1v1h1v2h-1v1h-1v1h-2v-1h-1v-1h-1v-2h1v-1h1z"/>
<path d="M740 706h2v1h1v1h1v2h-1v1h-1v1h-2v-1h-1v-1h-1v-2h1v-1h1z"/>
<path d="M758 706h2v1h1v1h1v2h-1v1h-1v1h-2v-1h-1v-1h-1v-2h1v-1h1z"/>
<path d="M777 706h2v1h1v1h1v2h-1v1h-1v1h-2v-1h-1v-1h-1v-2h1v-1h1z"/>
<path d="M795 706h2v1h1v1h1v2h-1v1h-1v1h-2v-1h-1v-1h-1v-2h1v-1h1z"/>
<path d="M813 706h2v1h1v1h1v2h-1v1h-1v1h-2v-1h-1v-1h-1v-2h1v-1h1z"/>
<path d="M832 706h2v1h1v1h1v2h-1v1h-1v1h-2v-1h-1v-1h-1v-2h1v-1h1z"/>
<path d="M850 706h2v1h1v1h1v2h-1v1h-1v1h-2v-1h-1v-1h-1v-2h1v-1h1z"/>
<path d="M868 706h2v1h1v1h1v2h-1v1h-1v1h-2v-1h-1v-1h-1v-2h1v-1h1z"/>
<path d="M886 706h2v1h1v1h1v2h-1v1h-1v1h-2v-1h-1v-1h-1v-2h1v-1h1z"/>
<path d="M905 706h2v1h1v1h1v2h-1v1h-1v1h-2v-1h-1v-1h-1v-2h1v-1h1z"/>
<path d="M923 706h2v1h1v1h1v2h-1v1h-1v1h-2v-1h-1v-1h-1v-2h1v-1h1z"/>
<path d="M941 706h2v1h1v1h1v2h-1v1h-1v1h-2v-1h-1v-1h-1v-2h1v-1h1z"/>
<path d="M960 706h2v1h1v1h1v2h-1v1h-1v1h-2v-1h-1v-1h-1v-2h1v-1h1z"/>
<path d="M978 706h2v1h1v1h1v2h-1v1h-1v1h-2v-1h-1v-1h-1v-2h1v-1h1z"/>
<path d="M996 706h2v1h1v1h1v2h-1v1h-1v1h-2v-1h-1v-1h-1v-2h1v-1h1z"/>
<path d="M1015 706h2v1h1v1h1v2h-1v1h-1v1h-2v-1h-1v-1h-1v-2h1v-1h1z"/>
<path d="M1033 706h2v1h1v1h1v2h-1v1h-1v1h-2v-1h-1v-1h-1v-2h1v-1h1z"/>
<path d="M1051 706h2v1h1v1h1v2h-1v1h-1v1h-2v-1h-1v-1h-1v-2h1v-1h1z"/>
<path d="M1070 706h2v1h1v1h1v2h-1v1h-1v1h-2v-1h-1v-1h-1v-2h1v-1h1z"/>
<path d="M1088 706h2v1h1v1h1v2h-1v1h-1v1h-2v-1h-1v-1h-1v-2h1v-1h1z"/>
<path d="M1106 706h2v1h1v1h1v2h-1v1h-1v1h-2v-1h-1v-1h-1v-2h1v-1h1z"/>
<path d="M1125 706h2v1h1v1h1v2h-1v1h-1v1h-2v-1h-1v-1h-1v-2h1v-1h1z"/>
<path d="M1143 706h2v1h1v1h1v2h-1v1h-1v1h-2v-1h-1v-1h-1v-2h1v-1h1z"/>
<path d="M1161 706h2v1h1v1h1v2h-1v1h-1v1h-2v-1h-1v-1h-1v-2h1v-1h1z"/>
<path d="M1180 706h2v1h1v1h1v2h-1v1h-1v1h-2v-1h-1v-1h-1v-2h1v-1h1z"/>
<path d="M1198 706h2v1h1v1h1v2h-1v1h-1v1h-2v-1h-1v-1h-1v-2h1v-1h1z"/>
<path d="M1216 706h2v1h1v1h1v2h-1v1h-1v1h-2v-1h-1v-1h-1v-2h1v-1h1z"/>
<path d="M1234 706h2v1h1v1h1v2h-1v1h-1v1h-2v-1h-1v-1h-1v-2h1v-1h1z"/>
<path d="M1253 706h2v1h1v1h1v2h-1v1h-1v1h-2v-1h-1v-1h-1v-2h1v-1h1z"/>
<path d="M1271 706h2v1h1v1h1v2h-1v1h-1v1h-2v-1h-1v-1h-1v-2h1v-1h1z"/>
<path d="M1289 706h2v1h1v1h1v2h-1v1h-1v1h-2v-1h-1v-1h-1v-2h1v-1h1z"/>
<path d="M1308 706h2v1h1v1h1v2h-1v1h-1v1h-2v-1h-1v-1h-1v-2h1v-1h1z"/>
<path d="M1326 706h2v1h1v1h1v2h-1v1h-1v1h-2v-1h-1v-1h-1v-2h1v-1h1z"/>
<path d="M1344 706h2v1h1v1h1v2h-1v1h-1v1h-2v-1h-1v-1h-1v-2h1v-1h1z"/>
<path d="M1363 706h2v1h1v1h1v2h-1v1h-1v1h-2v-1h-1v-1h-1v-2h1v-1h1z"/>
<path d="M1381 706h2v1h1v1h1v2h-1v1h-1v1h-2v-1h-1v-1h-1v-2h1v-1h1z"/>
<path d="M1399 706h2v1h1v1h1v2h-1v1h-1v1h-2v-1h-1v-1h-1v-2h1v-1h1z"/>
<path d="M1418 706h2v1h1v1h1v2h-1v1h-1v1h-2v-1h-1v-1h-1v-2h1v-1h1z"/>
<path d="M1436 706h2v1h1v1h1v2h-1v1h-1v1h-2v-1h-1v-1h-1v-2h1v-1h1z"/>
<path d="M1454 706h2v1h1v1h1v2h-1v1h-1v1h-2v-1h-1v-1h-1v-2h1v-1h1z"/>
<path d="M1473 706h2v1h1v1h1v2h-1v1h-1v1h-2v-1h-1v-1h-1v-2h1v-1h1z"/>
<path d="M1491 706h2v1h1v1h1v2h-1v1h-1v1h-2v-1h-1v-1h-1v-2h1v-1h1z"/>
<path d="M1509 706h2v1h1v1h1v2h-1v1h-1v1h-2v-1h-1v-1h-1v-2h1v-1h1z"/>
<path d="M1527 706h2v1h1v1h1v2h-1v1h-1v1h-2v-1h-1v-1h-1v-2h1v-1h1z"/>
<path d="M1546 706h2v1h1v1h1v2h-1v1h-1v1h-2v-1h-1v-1h-1v-2h1v-1h1z"/>
<path d="M1564 706h2v1h1v1h1v2h-1v1h-1v1h-2v-1h-1v-1h-1v-2h1v-1h1z"/>
</g>
<g class="ce">
<rect x="0" y="0" width="1686" height="25" fill="#000"/>
<rect x="0" y="3" width="1686" height="20" fill="#1c1c1e"/>
<rect x="0" y="0" width="1686" height="2" fill="#30343f"/>
<rect x="0" y="2" width="1686" height="1" fill="#272a32"/>
<rect x="0" y="24" width="1686" height="1" fill="#1e1e1e"/>
<rect x="1369" y="3" width="1" height="20" fill="#0a0a0a"/>
<rect x="1403" y="3" width="1" height="20" fill="#0a0a0a"/>
<rect x="1437" y="3" width="1" height="20" fill="#0a0a0a"/>
<rect x="1472" y="3" width="1" height="20" fill="#0a0a0a"/>
<rect x="1508" y="3" width="1" height="20" fill="#0a0a0a"/>
<rect x="1543" y="3" width="1" height="20" fill="#0a0a0a"/>
<rect x="1577" y="3" width="1" height="20" fill="#0a0a0a"/>
<rect x="1612" y="3" width="1" height="20" fill="#0a0a0a"/>
<rect x="1647" y="3" width="1" height="20" fill="#0a0a0a"/>
<rect x="1682" y="3" width="1" height="20" fill="#0a0a0a"/>
</g>
<text x="28.2" y="18" fill="#e0e0e0">分时</text>
<text x="61.5" y="18" fill="#e0e0e0">1分钟</text>
<text x="100.6" y="18" fill="#e0e0e0">5分钟</text>
<text x="139.5" y="18" fill="#e0e0e0">15分钟</text>
<text x="185" y="18" fill="#e0e0e0">30分钟</text>
<text x="231" y="18" fill="#e0e0e0">60分钟</text>
<text x="277.8" y="18" fill="#ff3030">日线</text>
<text x="312" y="18" fill="#e0e0e0">周线</text>
<text x="346" y="18" fill="#e0e0e0">月线</text>
<text x="379" y="18" fill="#e0e0e0">多周期</text>
<text x="422" y="18" fill="#e0e0e0">更多</text>
<path d="M451.5 8.5L455.5 13.5L451.5 18.5" stroke="#e0e0e0" fill="none" stroke-width="1"/>
<text x="1386" y="18" fill="#e0e0e0" text-anchor="middle">复权</text>
<text x="1420" y="18" fill="#e0e0e0" text-anchor="middle">叠加</text>
<text x="1455" y="18" fill="#e0e0e0" text-anchor="middle">历史</text>
<text x="1490" y="18" fill="#e0e0e0" text-anchor="middle">统计</text>
<text x="1525.5" y="18" fill="#e0e0e0" text-anchor="middle">画线</text>
<text x="1560" y="18" fill="#e0e0e0" text-anchor="middle">F10</text>
<text x="1595" y="18" fill="#e0e0e0" text-anchor="middle">标记</text>
<text x="1629.5" y="18" fill="#e0e0e0" text-anchor="middle">+自选</text>
<text x="1665" y="18" fill="#e0e0e0" text-anchor="middle">返回</text>
<g stroke="#8a8a8a" fill="none" stroke-width="1"><path d="M0.5 9.5L3.5 12.5L0.5 15.5M3.5 9.5L6.5 12.5L3.5 15.5"/><rect x="5.5" y="8.5" width="11" height="10" rx="2"/><rect x="12" y="10" width="3" height="7" fill="#8a8a8a" stroke="none"/></g>
<text x="4" y="38" fill="#e0e0e0" textLength="82" lengthAdjust="spacing">深天地A (日线)</text>
<circle cx="98" cy="33.7" r="5.8" fill="#6e6e6e"/><path d="M95 32.2L98 35.7L101 32.2" stroke="#111" stroke-width="1.3" fill="none"/>
<text x="108" y="38" fill="#e0e0e0">默认主图</text>
<text x="161.8" y="38" fill="#e0e0e0" textLength="64" lengthAdjust="spacingAndGlyphs">MA5: 10.94</text>
<text x="232" y="38" fill="#ff0000" textLength="70.8" lengthAdjust="spacingAndGlyphs">MA10: 10.93</text>
<text x="309" y="38" fill="#ffff00" textLength="70.6" lengthAdjust="spacingAndGlyphs">MA20: 11.93</text>
<text x="385.3" y="38" fill="#0000ff" textLength="70.7" lengthAdjust="spacingAndGlyphs">MA60: 12.68</text>
<path d="M1603.5 29L1609 34.5L1603.5 40L1598 34.5Z" stroke="#8a8a8a" fill="none"/>
<rect x="1616.5" y="29.5" width="11" height="10" rx="2" stroke="#8a8a8a" fill="none"/><rect x="1623" y="31" width="3" height="7" fill="#8a8a8a"/>
<text x="1677" y="58" fill="#c00000" text-anchor="end">15.00</text>
<text x="1677" y="93" fill="#c00000" text-anchor="end">14.50</text>
<text x="1677" y="127" fill="#c00000" text-anchor="end">14.00</text>
<text x="1677" y="162" fill="#c00000" text-anchor="end">13.50</text>
<text x="1677" y="197" fill="#c00000" text-anchor="end">13.00</text>
<text x="1677" y="232" fill="#c00000" text-anchor="end">12.50</text>
<text x="1677" y="266" fill="#c00000" text-anchor="end">12.00</text>
<text x="1677" y="301" fill="#c00000" text-anchor="end">11.50</text>
<text x="1677" y="336" fill="#c00000" text-anchor="end">11.00</text>
<text x="1677" y="370" fill="#c00000" text-anchor="end">10.50</text>
<text x="1677" y="405" fill="#c00000" text-anchor="end">10.00</text>
<text x="1677" y="440" fill="#c00000" text-anchor="end">9.50</text>
<text x="1677" y="530" fill="#c00000" text-anchor="end">0.40</text>
<text x="1677" y="576" fill="#c00000" text-anchor="end">0.30</text>
<text x="1677" y="622" fill="#c00000" text-anchor="end">0.20</text>
<text x="1677" y="668" fill="#c00000" text-anchor="end">0.10</text>
<text x="1677" y="713" fill="#c00000" text-anchor="end">0.00</text>
<text x="1649" y="759" fill="#c00000" textLength="28" lengthAdjust="spacing">-0.10</text>
<text x="1649" y="805" fill="#c00000" textLength="28" lengthAdjust="spacing">-0.20</text>
<text x="1649" y="850" fill="#c00000" textLength="28" lengthAdjust="spacing">-0.30</text>
<g class="ce" fill="#f0f0f0">
<rect x="924" y="47" width="1" height="3"/>
<rect x="925" y="46" width="4" height="1"/>
<rect x="925" y="48" width="4" height="1"/>
<rect x="928" y="49" width="3" height="1"/>
<rect x="931" y="50" width="3" height="1"/>
<rect x="934" y="51" width="2" height="1"/>
<rect x="926" y="51" width="1" height="1"/>
<rect x="925" y="50" width="1" height="1"/>
<rect x="137" y="451" width="2" height="3"/>
<rect x="139" y="452" width="10" height="1"/>
<rect x="139" y="451" width="1" height="1"/>
<rect x="140" y="450" width="2" height="1"/>
<rect x="139" y="453" width="1" height="1"/>
<rect x="140" y="454" width="1" height="1"/>
<rect x="141" y="455" width="1" height="1"/>
</g>
<text x="938.8" y="57.8" fill="#f0f0f0">15.10</text>
<text x="150.6" y="457" fill="#f0f0f0">9.27</text>
<rect class="ce" x="496" y="458" width="13" height="13" fill="#003a8c"/>
<text x="496.5" y="469" fill="#fff">财</text>
<rect class="ce" x="679" y="458" width="13" height="13" fill="#8b4a0a"/>
<text x="679.5" y="469" fill="#fff">榜</text>
<rect class="ce" x="1303" y="458" width="13" height="13" fill="#008000"/>
<text x="1303.5" y="469" fill="#fff">减</text>
<rect class="ce" x="1375" y="458" width="13" height="13" fill="#008000"/>
<text x="1375.5" y="469" fill="#fff">跌</text>
<rect class="ce" x="1522" y="458" width="13" height="13" fill="#bf4f12"/>
<text x="1522.5" y="469" fill="#fff">预</text>
<circle cx="9" cy="480.7" r="5.8" fill="#6e6e6e"/><path d="M6 479.2L9 482.7L12 479.2" stroke="#111" stroke-width="1.3" fill="none"/>
<text x="19.5" y="485" fill="#e0e0e0">8短线高手</text>
<text x="80" y="485" fill="#ff0000">SK: -0.40</text>
<text x="135.5" y="485" fill="#ffff00">SD: -0.40</text>
<text x="192.4" y="485" fill="#ff00ff" textLength="78" lengthAdjust="spacing">多方能量: 0.03</text>
<text x="276.1" y="485" fill="#00ff00" textLength="82.7" lengthAdjust="spacing">空方能量: -0.03</text>
<text x="364.5" y="485" fill="#c4c4c4" textLength="78.8" lengthAdjust="spacing">强弱分界: 0.00</text>
<g class="ce" fill="#9c0000">
<rect x="227" y="906" width="1" height="15"/>
<rect x="520" y="906" width="1" height="15"/>
<rect x="923" y="906" width="1" height="15"/>
<rect x="1326" y="906" width="1" height="15"/>
<rect x="300" y="906" width="1" height="3"/>
<rect x="374" y="906" width="1" height="3"/>
<rect x="447" y="906" width="1" height="3"/>
<rect x="621" y="906" width="1" height="3"/>
<rect x="722" y="906" width="1" height="3"/>
<rect x="822" y="906" width="1" height="3"/>
<rect x="1024" y="906" width="1" height="3"/>
<rect x="1125" y="906" width="1" height="3"/>
<rect x="1225" y="906" width="1" height="3"/>
<rect x="71" y="907" width="84" height="14" fill="#000080"/>
<rect x="70" y="906" width="1" height="15"/><rect x="155" y="906" width="1" height="15"/>
</g>
<text x="9" y="918.5" fill="#d00000" textLength="39.3" lengthAdjust="spacing">2022年</text>
<text x="72.5" y="918.5" fill="#fff" textLength="81" lengthAdjust="spacing">2022/09/20/二</text>
<text x="229" y="918.5" fill="#d00000">10</text>
<text x="522" y="918.5" fill="#d00000">11</text>
<text x="925" y="918.5" fill="#d00000">12</text>
<text x="1327.5" y="918.5" fill="#d00000">1</text>
<text x="1644.5" y="920" fill="#e0e0e0">日线</text>
<rect class="ce" x="1684" y="88" width="2" height="1" fill="#c00000"/>
<rect class="ce" x="1684" y="272" width="2" height="1" fill="#c00000"/>
<rect class="ce" x="1684" y="377" width="2" height="1" fill="#c00000"/>
<rect class="ce" x="1684" y="431" width="2" height="1" fill="#c00000"/>
<rect class="ce" x="1684" y="453" width="2" height="1" fill="#c00000"/>
<rect class="ce" x="1684" y="533" width="2" height="1" fill="#c00000"/>
<rect class="ce" x="1684" y="179" width="2" height="1" fill="#c08000"/><rect class="ce" x="1684" y="432" width="2" height="2" fill="#2a2e2e"/>
</svg></body></html>
